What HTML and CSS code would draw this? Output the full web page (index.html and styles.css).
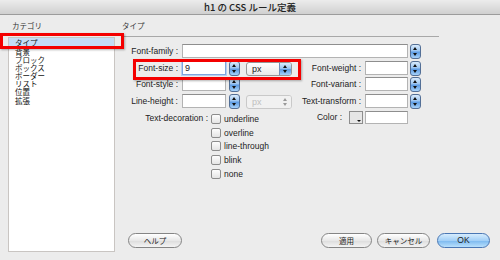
FILE: index.html
```html
<!DOCTYPE html>
<html lang="ja">
<head>
    <meta charset="UTF-8">
    <title>h1 の CSS ルール定義</title>
    <link rel="stylesheet" href="styles.css">
</head>
<body>
    <div class="titlebar">h1 の CSS ルール定義</div>
    <div class="main">
        <div class="category">
            <div class="pane-head">カテゴリ</div>
            <ul class="cat-list">
                <li class="selected">タイプ</li>
                <li>背景</li>
                <li>ブロック</li>
                <li>ボックス</li>
                <li>ボーダー</li>
                <li>リスト</li>
                <li>位置</li>
                <li>拡張</li>
            </ul>
        </div>
        <div class="panel">
            <div class="pane-head panel-head">タイプ</div>
            <div class="type-grid">
                <label class="lbl">Font-family :</label>
                <div class="field wide"></div>
                <div class="spin-cell right"><span class="spin"></span></div>

                <label class="lbl">Font-size :</label>
                <div class="field focus">9</div>
                <div class="spin-cell"><span class="spin"></span></div>
                <div class="select"><span class="sel-text">px</span><span class="cap"></span></div>
                <label class="lbl">Font-weight :</label>
                <div class="field"></div>
                <div class="spin-cell right"><span class="spin"></span></div>

                <label class="lbl">Font-style :</label>
                <div class="field"></div>
                <div class="spin-cell"><span class="spin"></span></div>
                <div></div>
                <label class="lbl">Font-variant :</label>
                <div class="field"></div>
                <div class="spin-cell right"><span class="spin"></span></div>

                <label class="lbl">Line-height :</label>
                <div class="field"></div>
                <div class="spin-cell"><span class="spin"></span></div>
                <div class="select disabled"><span class="sel-text">px</span><span class="cap"></span></div>
                <label class="lbl">Text-transform :</label>
                <div class="field"></div>
                <div class="spin-cell right"><span class="spin"></span></div>

                <div class="deco">
                    <label class="deco-lbl">Text-decoration :</label>
                    <div class="checks">
                        <div class="check"><span class="box"></span>underline</div>
                        <div class="check"><span class="box"></span>overline</div>
                        <div class="check"><span class="box"></span>line-through</div>
                        <div class="check"><span class="box"></span>blink</div>
                        <div class="check"><span class="box"></span>none</div>
                    </div>
                </div>
                <div class="color-cell">
                    <label class="color-lbl">Color :</label>
                    <span class="swatch"></span>
                </div>
                <div class="field color-field"></div>
            </div>
            <div class="buttons">
                <button class="btn help">ヘルプ</button>
                <span class="spacer"></span>
                <button class="btn apply">適用</button>
                <button class="btn cancel">キャンセル</button>
                <button class="btn ok">OK</button>
            </div>
        </div>
    </div>
    <div class="mark mark-cat"></div>
    <div class="mark mark-size"></div>
</body>
</html>
```

FILE: styles.css
```css
body {
    margin: 0;
    width: 500px;
    height: 260px;
    overflow: hidden;
    background: #ececec;
    font-family: "Liberation Sans", "Noto Sans CJK JP", sans-serif;
    font-size: 8.5px;
    color: #222;
    position: relative;
}
.titlebar {
    height: 14px;
    line-height: 15px;
    text-align: center;
    font-family: "Noto Sans CJK JP", sans-serif;
    font-size: 9.5px;
    font-weight: 500;
    color: #222;
    background: linear-gradient(#ececec, #d0d0d0);
    border-bottom: 1px solid #9c9c9c;
}
.main {
    display: flex;
    gap: 7px;
    height: 245px;
    box-sizing: border-box;
    padding: 0 10px 8px 8px;
}
.category {
    width: 107px;
    display: flex;
    flex-direction: column;
}
.pane-head {
    height: 22px;
    box-sizing: border-box;
    padding: 6px 0 0 4px;
    line-height: 10px;
    font-family: "Noto Sans CJK JP", sans-serif;
    font-size: 7.5px;
    color: #333;
}
.cat-list {
    flex: 1;
    margin: 0;
    padding: 0;
    list-style: none;
    background: #fff;
    border: 1px solid #c9c5c2;
    font-family: "Noto Sans CJK JP", sans-serif;
    font-size: 7.5px;
    color: #111;
}
.cat-list li {
    height: 8.1px;
    line-height: 8.1px;
    padding-left: 6px;
}
.cat-list li.selected {
    height: 9px;
    line-height: 9px;
    margin-bottom: 1px;
    background: #c4dcf6;
}
.panel {
    flex: 1;
    display: flex;
    flex-direction: column;
}
.panel-head {
    width: 317px;
    padding-left: 0;
    border-bottom: 1px solid #a8a8a8;
}
.type-grid {
    display: grid;
    grid-template-columns: 60px 44px 20px 46px 73px 43px 14px;
    grid-template-rows: repeat(4, 14px) auto;
    row-gap: 2.5px;
    margin-top: 7px;
}
.lbl {
    text-align: right;
    padding-right: 4px;
    line-height: 14px;
    white-space: nowrap;
}
.field {
    height: 14px;
    box-sizing: border-box;
    background: #fff;
    border: 1px solid #b3b3b3;
    border-top-color: #8e8e8e;
    padding-left: 2px;
    line-height: 12px;
    font-size: 9px;
}
.field.wide {
    grid-column: 2 / 7;
}
.field.focus {
    border: 1px solid #7ea6dd;
    box-shadow: 0 0 0 1px #b6cff0;
}
.spin-cell {
    padding-left: 3px;
}
.spin-cell.right {
    padding-left: 2px;
}
.spin {
    display: block;
    position: relative;
    width: 11px;
    height: 15px;
    box-sizing: border-box;
    border: 1px solid #536f96;
    border-radius: 3px;
    background: linear-gradient(#d9ebfc, #9cc6f2 45%, #5d9be3 55%, #a6d2fa);
}
.spin::before,
.spin::after {
    content: "";
    position: absolute;
    left: 2px;
    border-left: 2.5px solid transparent;
    border-right: 2.5px solid transparent;
}
.spin::before {
    top: 2px;
    border-bottom: 3px solid #111;
}
.spin::after {
    bottom: 2px;
    border-top: 3px solid #111;
}
.select {
    display: flex;
    height: 14px;
    margin-top: 1px;
    box-sizing: border-box;
    border: 1px solid #979797;
    border-radius: 3px;
    background: linear-gradient(#fff, #e9e9e9);
    overflow: hidden;
}
.sel-text {
    flex: 1;
    padding-left: 5px;
    line-height: 12px;
    font-size: 9px;
}
.cap {
    position: relative;
    width: 11px;
    border-left: 1px solid #6f8fba;
    background: linear-gradient(#d9ebfc, #9cc6f2 45%, #5d9be3 55%, #a6d2fa);
}
.cap::before,
.cap::after {
    content: "";
    position: absolute;
    left: 3px;
    border-left: 2.5px solid transparent;
    border-right: 2.5px solid transparent;
}
.cap::before {
    top: 2px;
    border-bottom: 3px solid #111;
}
.cap::after {
    bottom: 2px;
    border-top: 3px solid #111;
}
.select.disabled {
    border-color: #c9c9c9;
    background: #f1f1f1;
}
.select.disabled .sel-text {
    color: #c0c0c0;
}
.select.disabled .cap {
    border-left: none;
    background: #f1f1f1;
}
.select.disabled .cap::before {
    border-bottom-color: #999;
}
.select.disabled .cap::after {
    border-top-color: #999;
}
.deco {
    grid-column: 1 / 5;
    display: flex;
    gap: 3px;
    margin-top: 2px;
}
.deco-lbl {
    width: 86px;
    text-align: right;
    line-height: 13.7px;
    white-space: nowrap;
}
.checks {
    display: flex;
    flex-direction: column;
}
.check {
    display: flex;
    align-items: center;
    gap: 3px;
    height: 13.7px;
}
.box {
    width: 10px;
    height: 10px;
    box-sizing: border-box;
    border: 1px solid #8c8c8c;
    border-radius: 2px;
    background: linear-gradient(#fdfdfd, #e4e4e4);
}
.color-cell {
    display: flex;
    justify-content: flex-end;
    align-items: flex-start;
    gap: 7px;
    padding-right: 2px;
    margin-top: 1px;
}
.color-lbl {
    line-height: 13px;
}
.swatch {
    position: relative;
    width: 14px;
    height: 13px;
    box-sizing: border-box;
    border: 1px solid #8d8d8d;
    background: #e6e6e6;
}
.swatch::after {
    content: "";
    position: absolute;
    right: 1px;
    bottom: 1px;
    border-left: 2px solid transparent;
    border-right: 2px solid transparent;
    border-top: 2px solid #111;
}
.field.color-field {
    height: 13px;
    margin-top: 1px;
}
.buttons {
    display: flex;
    margin-top: auto;
    margin-bottom: 4px;
    padding-left: 6px;
}
.spacer {
    flex: 1;
}
.btn {
    height: 15px;
    padding: 0;
    border: 1px solid #858585;
    border-radius: 8px;
    background: linear-gradient(#ffffff, #e8e8e8 50%, #dcdcdc 51%, #f4f4f4);
    font-family: "Noto Sans CJK JP", sans-serif;
    font-size: 7.5px;
    line-height: 13px;
    color: #222;
}
.help {
    width: 54px;
}
.apply {
    width: 51px;
    margin-right: 5px;
}
.cancel {
    width: 53px;
    margin-right: 7px;
}
.ok {
    width: 53px;
    font-family: "Liberation Sans", sans-serif;
    font-size: 8.5px;
    border-color: #4a77b4;
    background: linear-gradient(#d6ecfd, #a3d0f7 50%, #7ab8ef 51%, #b9e0fc);
}
.mark {
    position: absolute;
    box-sizing: border-box;
    border: 3px solid #f40000;
    box-shadow: 1px 1px 2px rgba(0, 0, 0, 0.3);
}
.mark-cat {
    left: 0;
    top: 33px;
    width: 124px;
    height: 16px;
}
.mark-size {
    left: 133px;
    top: 59px;
    width: 168px;
    height: 21px;
}
```
